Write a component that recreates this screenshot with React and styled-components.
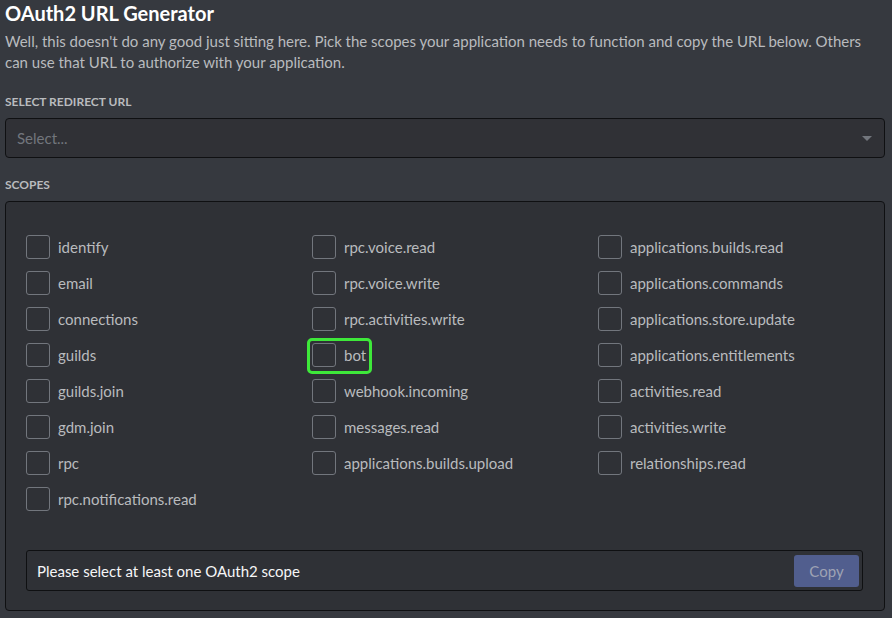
import React from 'react'
import styled, { createGlobalStyle } from 'styled-components'

const GlobalStyle = createGlobalStyle`
  html, body {
    margin: 0;
    background: #36393f;
  }
  body {
    font-family: Lato, "Open Sans", sans-serif;
  }
`

const Page = styled.div`
  padding: 1px 7px 6px 5px;
  background: #36393f;
  min-height: 618px;
  box-sizing: border-box;
`

const Title = styled.h1`
  margin: 0;
  font-size: 20px;
  font-weight: 700;
  color: #ffffff;
  line-height: 24px;
`

const Description = styled.p`
  margin: 6px 0 0;
  font-size: 15px;
  line-height: 21px;
  color: #b9bbbe;
`

const Label = styled.div`
  margin-top: ${p => p.top}px;
  font-size: 12px;
  font-weight: 700;
  text-transform: uppercase;
  color: #b9bbbe;
  line-height: 16px;
`

const SelectBox = styled.div`
  margin-top: 8px;
  height: 40px;
  box-sizing: border-box;
  display: flex;
  align-items: center;
  justify-content: space-between;
  padding: 0 12px 0 11px;
  background: #303136;
  border: 1px solid #0f1012;
  border-radius: 4px;
  color: #72767d;
  font-size: 15px;
`

const Arrow = styled.span`
  width: 0;
  height: 0;
  border-left: 5px solid transparent;
  border-right: 5px solid transparent;
  border-top: 5px solid #72767d;
`

const ScopesBox = styled.div`
  margin-top: 8px;
  background: #2f3136;
  border: 1px solid #0f1012;
  border-radius: 4px;
  padding: 33px 21px 19px 20px;
`

const Grid = styled.div`
  display: grid;
  grid-template-columns: 286px 286px 1fr;
  grid-auto-flow: column;
  grid-template-rows: repeat(8, 36px);
`

const Item = styled.label`
  display: flex;
  align-items: center;
  gap: 8px;
  align-self: start;
  justify-self: start;
  height: 24px;
  font-size: 15px;
  color: #b9bbbe;
  position: relative;
`

const Check = styled.span`
  width: 24px;
  height: 24px;
  box-sizing: border-box;
  border: 1px solid #72767d;
  border-radius: 3px;
`

const Highlight = styled.span`
  position: absolute;
  left: -5px;
  top: -5px;
  right: -6px;
  bottom: -7px;
  border: 3px solid #3ee83a;
  border-radius: 5px;
  pointer-events: none;
`

const UrlBox = styled.div`
  margin-top: 27px;
  height: 41px;
  box-sizing: border-box;
  display: flex;
  align-items: center;
  justify-content: space-between;
  padding: 0 3px 0 10px;
  background: #2f3136;
  border: 1px solid #0f1012;
  border-radius: 3px;
  color: #f6f6f7;
  font-size: 15px;
`

const CopyButton = styled.button`
  width: 65px;
  height: 32px;
  border: none;
  border-radius: 3px;
  background: #515e8e;
  color: #9ea3b4;
  font-family: inherit;
  font-size: 15px;
`

const cols = [
  ['identify', 'email', 'connections', 'guilds', 'guilds.join', 'gdm.join', 'rpc', 'rpc.notifications.read'],
  ['rpc.voice.read', 'rpc.voice.write', 'rpc.activities.write', 'bot', 'webhook.incoming', 'messages.read', 'applications.builds.upload'],
  ['applications.builds.read', 'applications.commands', 'applications.store.update', 'applications.entitlements', 'activities.read', 'activities.write', 'relationships.read'],
]

const App = () => (
  <Page>
    <GlobalStyle />
    <Title>OAuth2 URL Generator</Title>
    <Description>
      Well, this doesn't do any good just sitting here. Pick the scopes your application needs to function and copy the URL below. Others can use that URL to authorize with your application.
    </Description>
    <Label top={21}>Select Redirect URL</Label>
    <SelectBox>
      <span>Select...</span>
      <Arrow />
    </SelectBox>
    <Label top={19}>Scopes</Label>
    <ScopesBox>
      <Grid>
        {cols.map((col, ci) =>
          col.map((name, ri) => (
            <Item key={name} style={{ gridColumn: ci + 1, gridRow: ri + 1 }}>
              <Check />
              {name}
              {name === 'bot' && <Highlight />}
            </Item>
          ))
        )}
      </Grid>
      <UrlBox>
        <span>Please select at least one OAuth2 scope</span>
        <CopyButton>Copy</CopyButton>
      </UrlBox>
    </ScopesBox>
  </Page>
)

export default App
